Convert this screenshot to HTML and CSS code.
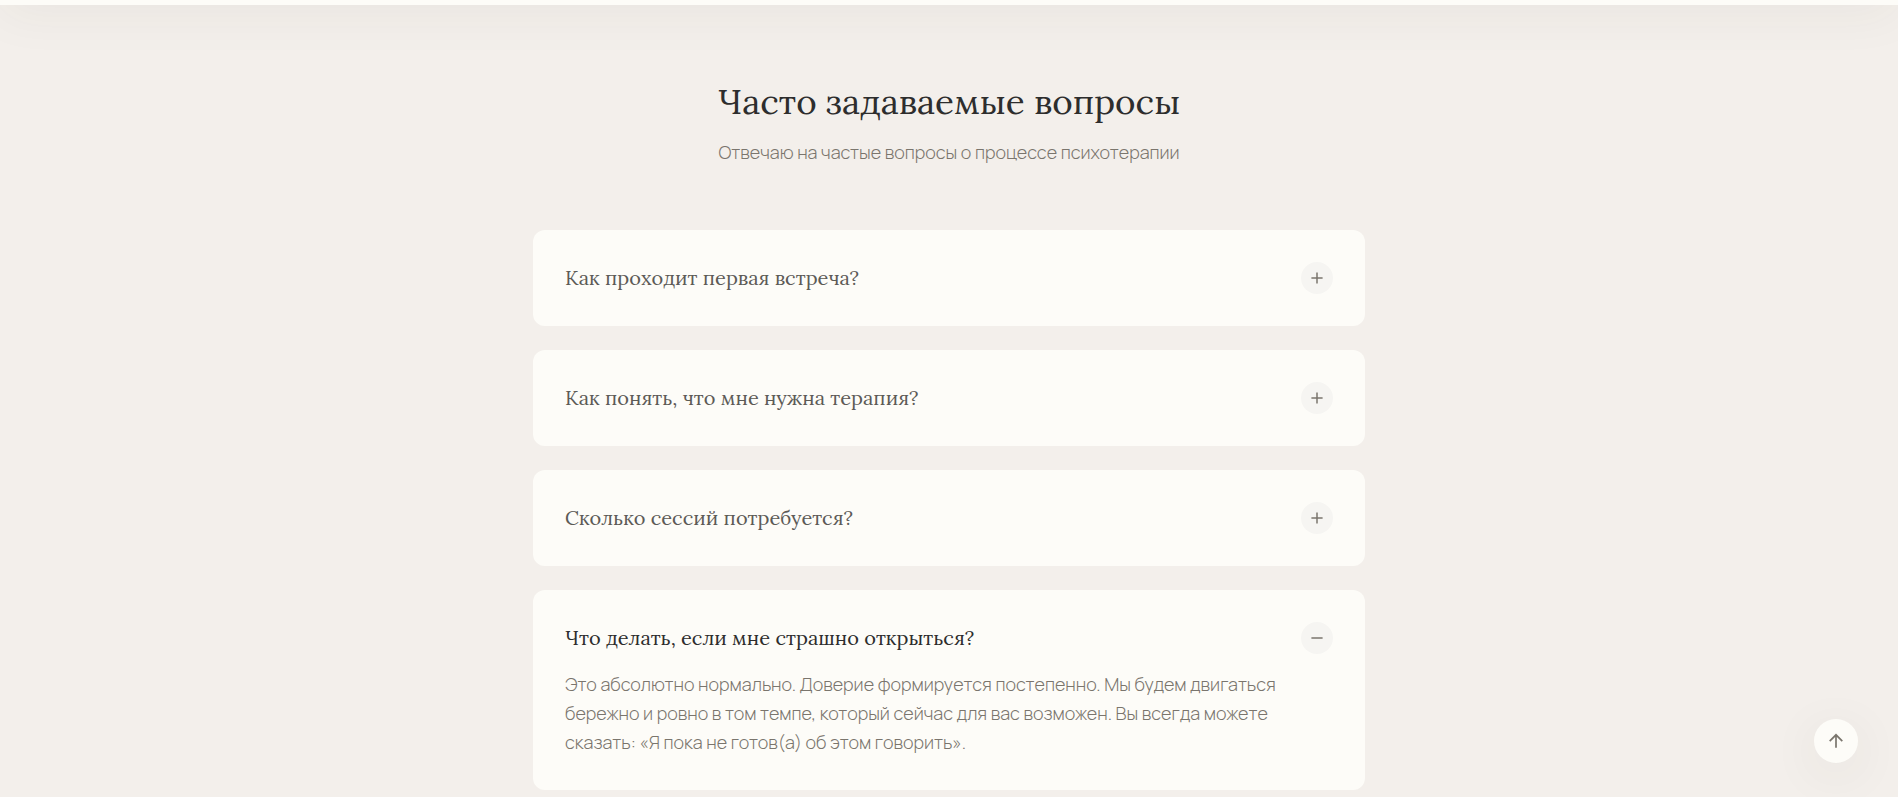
FILE: index.html
```html
<!DOCTYPE html>
<html lang="ru">
<head>
<meta charset="utf-8">
<meta name="viewport" content="width=device-width, initial-scale=1">
<title>Часто задаваемые вопросы</title>
<link rel="stylesheet" href="styles.css">
</head>
<body>
<div class="section-edge"></div>
<main class="faq">
  <header class="faq-header">
    <h1 class="faq-title">Часто задаваемые вопросы</h1>
    <p class="faq-subtitle">Отвечаю на частые вопросы о процессе психотерапии</p>
  </header>
  <div class="faq-list">
    <section class="card">
      <h2 class="card-heading"><button class="question" type="button" aria-expanded="false">
        <span>Как проходит первая встреча?</span>
        <span class="toggle"><svg width="12" height="12" viewBox="0 0 12 12" aria-hidden="true"><path d="M.4 6h11.200"/><path d="M6 .4v11.200"/></svg></span>
      </button></h2>
    </section>
    <section class="card">
      <h2 class="card-heading"><button class="question" type="button" aria-expanded="false">
        <span>Как понять, что мне нужна терапия?</span>
        <span class="toggle"><svg width="12" height="12" viewBox="0 0 12 12" aria-hidden="true"><path d="M.4 6h11.200"/><path d="M6 .4v11.200"/></svg></span>
      </button></h2>
    </section>
    <section class="card">
      <h2 class="card-heading"><button class="question" type="button" aria-expanded="false">
        <span>Сколько сессий потребуется?</span>
        <span class="toggle"><svg width="12" height="12" viewBox="0 0 12 12" aria-hidden="true"><path d="M.4 6h11.200"/><path d="M6 .4v11.200"/></svg></span>
      </button></h2>
    </section>
    <section class="card">
      <h2 class="card-heading"><button class="question question-open" type="button" aria-expanded="true" aria-controls="answer-fear">
        <span>Что делать, если мне страшно открыться?</span>
        <span class="toggle"><svg width="12" height="12" viewBox="0 0 12 12" aria-hidden="true"><path d="M.4 6h11.200"/></svg></span>
      </button></h2>
      <p class="answer" id="answer-fear">Это абсолютно нормально. Доверие формируется постепенно. Мы будем двигаться бережно и ровно в том темпе, который сейчас для вас возможен. Вы всегда можете сказать: «Я пока не готов(а) об этом говорить».</p>
    </section>
  </div>
</main>
<button class="to-top" type="button" aria-label="Наверх">
  <svg width="16" height="16" viewBox="0 0 16 16" aria-hidden="true"><path d="M8 14.700V1.800M1.700 8.100 8 1.800l6.300 6.300"/></svg>
</button>
</body>
</html>
```
FILE: styles.css
```css
* {
  box-sizing: border-box;
}

body {
  display: flow-root;
  margin: 0;
  min-height: 100vh;
  background: #f3efeb;
  color: #7a756d;
  font-family: Manrope, Inter, "Open Sans", sans-serif;
  font-weight: 300;
}

/* Only the lower rim shows, so the shadow below it keeps its full depth. */
.section-edge {
  height: 100px;
  margin-top: -95px;
  background: #fdfcf8;
  box-shadow: 0 10px 50px rgba(60, 60, 45, 0.05);
}

.faq {
  max-width: 864px;
  margin: 0 auto;
  padding: 73px 16px 0;
}

.faq-header {
  text-align: center;
  margin-bottom: 63px;
}

.faq-title {
  margin: 0 0 12px;
  color: #2d2d2d;
  font-family: Lora, "Liberation Serif", serif;
  font-size: 35px;
  font-weight: 400;
  line-height: 48px;
}

.faq-subtitle {
  margin: 0;
  font-size: 18px;
  line-height: 29px;
}

.faq-list {
  display: grid;
  gap: 24px;
}

.card {
  padding: 32px;
  border-radius: 12px;
  background: #fdfcf8;
}

.card-heading {
  margin: 0;
}

.question {
  display: flex;
  align-items: center;
  justify-content: space-between;
  gap: 24px;
  width: 100%;
  padding: 0;
  border: 0;
  background: none;
  color: #5c5a56;
  font-family: Lora, "Liberation Serif", serif;
  font-size: 20px;
  font-weight: 400;
  line-height: 32px;
  text-align: left;
  cursor: pointer;
}

.question-open {
  color: #2d2d2d;
}

.toggle {
  display: grid;
  flex: none;
  place-items: center;
  width: 32px;
  height: 32px;
  border-radius: 50%;
  background: #f6f5f2;
}

.toggle svg {
  fill: none;
  stroke: #7a756d;
  stroke-width: 1.5;
}

.answer {
  margin: 0;
  padding: 16px 48px 1px 0;
  font-size: 18px;
  line-height: 29px;
}

.to-top {
  position: fixed;
  right: 40px;
  bottom: 34px;
  display: grid;
  place-items: center;
  width: 44px;
  height: 44px;
  padding: 0;
  border: 0;
  border-radius: 50%;
  background: #fdfcf8;
  box-shadow: 0 10px 50px rgba(60, 60, 45, 0.08);
  cursor: pointer;
}

.to-top svg {
  fill: none;
  stroke: #7a756d;
  stroke-width: 1.7;
}
```
